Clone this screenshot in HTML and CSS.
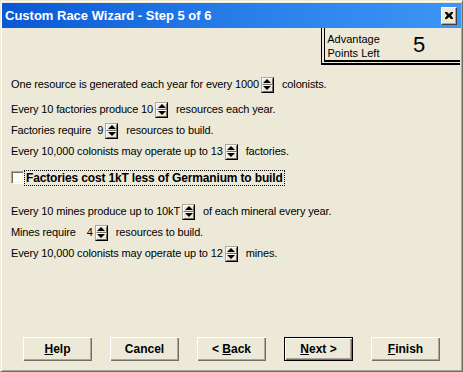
FILE: index.html
```html
<!DOCTYPE html>
<html>
<head>
<meta charset="utf-8">
<link rel="stylesheet" href="styles.css">
</head>
<body>
<div class="window">
  <div class="titlebar">
    <span class="title">Custom Race Wizard - Step 5 of 6</span>
    <span class="close"><svg width="8" height="7" viewBox="0 0 8 7"><path d="M0 0h2l2 2l2-2h2v1l-2 2.5l2 2.5v1h-2l-2-2l-2 2h-2v-1l2-2.5l-2-2.5z" fill="#000"/></svg></span>
  </div>
  <div class="content">
    <div class="adv-row">
      <div class="adv">
        <div class="adv-label">Advantage<br>Points Left</div>
        <div class="adv-value">5</div>
      </div>
    </div>

    <div class="row first"><span>One resource is generated each year for every 1000</span><span class="spin"><span class="up"></span><span class="dn"></span></span><span class="after">colonists.</span></div>

    <div class="row gap-a"><span>Every 10 factories produce 10</span><span class="spin"><span class="up"></span><span class="dn"></span></span><span class="after">resources each year.</span></div>
    <div class="row"><span>Factories require</span><span class="num n-fac">9</span><span class="spin"><span class="up"></span><span class="dn"></span></span><span class="after">resources to build.</span></div>
    <div class="row"><span>Every 10,000 colonists may operate up to 13</span><span class="spin"><span class="up"></span><span class="dn"></span></span><span class="after">factories.</span></div>

    <div class="row check-row"><span class="cb"></span><span class="cb-label">Factories cost 1kT less of Germanium to build</span></div>

    <div class="row gap-b"><span>Every 10 mines produce up to 10kT</span><span class="spin"><span class="up"></span><span class="dn"></span></span><span class="after">of each mineral every year.</span></div>
    <div class="row"><span>Mines require</span><span class="num n-mine">4</span><span class="spin"><span class="up"></span><span class="dn"></span></span><span class="after">resources to build.</span></div>
    <div class="row"><span>Every 10,000 colonists may operate up to 12</span><span class="spin"><span class="up"></span><span class="dn"></span></span><span class="after">mines.</span></div>

    <div class="buttons">
      <span class="btn"><span><u>H</u>elp</span></span>
      <span class="btn"><span>Cancel</span></span>
      <span class="btn"><span>&lt; <u>B</u>ack</span></span>
      <span class="btn default"><span><u>N</u>ext &gt;</span></span>
      <span class="btn"><span><u>F</u>inish</span></span>
    </div>
  </div>
</div>
</body>
</html>
```

FILE: styles.css
```css
html, body {
  margin: 0;
  padding: 0;
  background: #ECE9D8;
}

.window {
  width: 463px;
  height: 372px;
  box-sizing: border-box;
  background: #ECE9D8;
  border: 1px solid;
  border-color: #ECE9D8 #716F64 #716F64 #ECE9D8;
  box-shadow: inset 1px 1px 0 #fff, inset -1px -1px 0 #ACA899;
  padding: 2px 1px 1px 1px;
  font-family: "Liberation Sans", Arial, sans-serif;
  font-size: 11px;
  color: #000;
  display: flex;
  flex-direction: column;
}

.titlebar {
  height: 25px;
  flex: none;
  display: flex;
  align-items: center;
  justify-content: space-between;
  background: linear-gradient(90deg, #0a58d4 0%, #2a80ea 55%, #3d95f5 100%);
  padding: 0 4px 0 3px;
}

.title {
  color: #fff;
  font-weight: bold;
  font-size: 13px;
  line-height: 16px;
  white-space: nowrap;
}

.close {
  width: 16px;
  height: 18px;
  box-sizing: border-box;
  background: #ECE9D8;
  border: 1px solid;
  border-color: #fff #404040 #404040 #fff;
  box-shadow: inset -1px -1px 0 #ACA899;
  display: flex;
  align-items: center;
  justify-content: center;
  padding: 0 1px 1px 0;
}

.content {
  flex: 1;
  display: flex;
  flex-direction: column;
}

.adv-row {
  display: flex;
  justify-content: flex-end;
  padding-right: 1px;
}

.adv {
  width: 139px;
  height: 37px;
  box-sizing: border-box;
  border-left: 4px double #000;
  border-bottom: 5px double #000;
  display: flex;
  align-items: flex-start;
  padding-left: 2px;
}

.adv-label {
  width: 53px;
  text-align: center;
  font-size: 11px;
  line-height: 14px;
  padding-top: 4px;
}

.adv-value {
  font-size: 22px;
  line-height: 24px;
  margin-left: 33px;
  margin-top: 5px;
}

.row {
  display: flex;
  align-items: center;
  height: 21px;
  padding-left: 9px;
  white-space: nowrap;
  line-height: 13px;
  letter-spacing: -0.14px;
}

.row.first { margin-top: 9px; }
.row.gap-a { margin-top: 4px; }
.row.check-row { margin-top: 5px; padding-left: 9px; }
.row.gap-b { margin-top: 13px; }

.num.n-fac { margin-left: 6px; }
.num.n-mine { margin-left: 11px; }

.after { margin-left: 8px; }

.spin {
  width: 13px;
  height: 16px;
  margin-left: 2px;
  box-sizing: border-box;
  display: flex;
  flex-direction: column;
  border: 1px solid;
  border-color: #ACA899 #000 #000 #ACA899;
  background: #000;
}

.spin .up,
.spin .dn {
  flex: 1;
  box-sizing: border-box;
  background: #ECE9D8;
  border-top: 1px solid #fff;
  border-left: 1px solid #fff;
  border-right: 1px solid #716F64;
  border-bottom: 1px solid #716F64;
  display: flex;
  align-items: center;
  justify-content: center;
}

.spin .up::after {
  content: "";
  width: 0;
  height: 0;
  border-left: 4px solid transparent;
  border-right: 4px solid transparent;
  border-bottom: 4px solid #000;
}

.spin .dn::after {
  content: "";
  width: 0;
  height: 0;
  border-left: 4px solid transparent;
  border-right: 4px solid transparent;
  border-top: 4px solid #000;
}

.cb {
  width: 13px;
  height: 13px;
  box-sizing: border-box;
  background: #fff;
  border: 1px solid;
  border-color: #ACA899 #fff #fff #ACA899;
  box-shadow: inset 1px 1px 0 #716F64, inset -1px -1px 0 #F1EFE2;
}

.cb-label {
  font-weight: bold;
  font-size: 12px;
  line-height: 14px;
  letter-spacing: -0.15px;
  border: 1px dotted #000;
  padding: 0 1px;
}

.buttons {
  display: flex;
  gap: 18px;
  margin-top: 73px;
  padding-left: 21px;
}

.btn {
  width: 69px;
  height: 24px;
  box-sizing: border-box;
  display: flex;
  align-items: center;
  justify-content: center;
  background: #ECE9D8;
  font-weight: bold;
  font-size: 12px;
  white-space: pre;
  box-shadow: inset 1px 1px 0 #fff, inset -1px -1px 0 #716F64, inset -2px -2px 0 #ACA899;
}

.btn.default {
  border: 1px solid #000;
}

.btn u {
  text-decoration: underline;
  text-underline-offset: 1px;
}
```
